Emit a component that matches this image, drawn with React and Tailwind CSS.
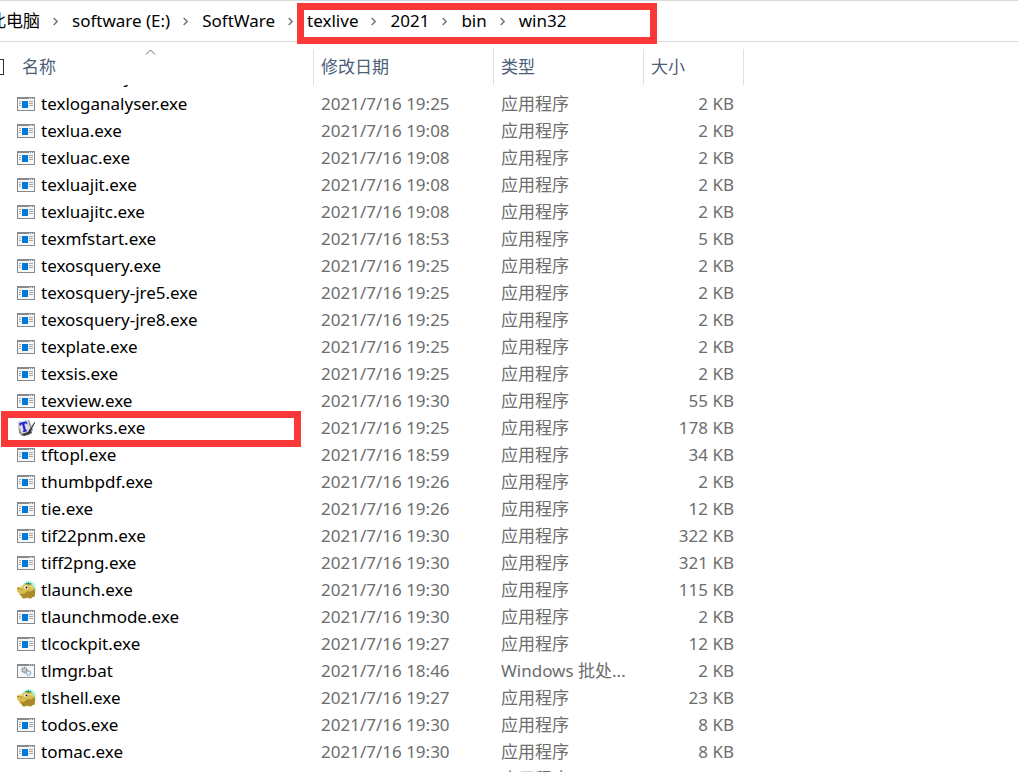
import React, { useLayoutEffect, useRef } from 'react';

const crumbs = ['此电脑', 'software (E:)', 'SoftWare', 'texlive', '2021', 'bin', 'win32'];

const APP = '应用程序';

const files = [
  { name: 'texliveonfly.exe', date: '2021/7/16 19:25', type: APP, size: '2 KB' },
  { name: 'texloganalyser.exe', date: '2021/7/16 19:25', type: APP, size: '2 KB' },
  { name: 'texlua.exe', date: '2021/7/16 19:08', type: APP, size: '2 KB' },
  { name: 'texluac.exe', date: '2021/7/16 19:08', type: APP, size: '2 KB' },
  { name: 'texluajit.exe', date: '2021/7/16 19:08', type: APP, size: '2 KB' },
  { name: 'texluajitc.exe', date: '2021/7/16 19:08', type: APP, size: '2 KB' },
  { name: 'texmfstart.exe', date: '2021/7/16 18:53', type: APP, size: '5 KB' },
  { name: 'texosquery.exe', date: '2021/7/16 19:25', type: APP, size: '2 KB' },
  { name: 'texosquery-jre5.exe', date: '2021/7/16 19:25', type: APP, size: '2 KB' },
  { name: 'texosquery-jre8.exe', date: '2021/7/16 19:25', type: APP, size: '2 KB' },
  { name: 'texplate.exe', date: '2021/7/16 19:25', type: APP, size: '2 KB' },
  { name: 'texsis.exe', date: '2021/7/16 19:25', type: APP, size: '2 KB' },
  { name: 'texview.exe', date: '2021/7/16 19:30', type: APP, size: '55 KB' },
  { name: 'texworks.exe', date: '2021/7/16 19:25', type: APP, size: '178 KB', icon: 'texworks', marked: true },
  { name: 'tftopl.exe', date: '2021/7/16 18:59', type: APP, size: '34 KB' },
  { name: 'thumbpdf.exe', date: '2021/7/16 19:26', type: APP, size: '2 KB' },
  { name: 'tie.exe', date: '2021/7/16 19:26', type: APP, size: '12 KB' },
  { name: 'tif22pnm.exe', date: '2021/7/16 19:30', type: APP, size: '322 KB' },
  { name: 'tiff2png.exe', date: '2021/7/16 19:30', type: APP, size: '321 KB' },
  { name: 'tlaunch.exe', date: '2021/7/16 19:30', type: APP, size: '115 KB', icon: 'hippo' },
  { name: 'tlaunchmode.exe', date: '2021/7/16 19:30', type: APP, size: '2 KB' },
  { name: 'tlcockpit.exe', date: '2021/7/16 19:27', type: APP, size: '12 KB' },
  { name: 'tlmgr.bat', date: '2021/7/16 18:46', type: 'Windows 批处...', size: '2 KB', icon: 'batch' },
  { name: 'tlshell.exe', date: '2021/7/16 19:27', type: APP, size: '23 KB', icon: 'hippo' },
  { name: 'todos.exe', date: '2021/7/16 19:30', type: APP, size: '8 KB' },
  { name: 'tomac.exe', date: '2021/7/16 19:30', type: APP, size: '8 KB' },
  { name: 'tpic2pdftex.exe', date: '2021/7/16 19:30', type: APP, size: '2 KB' },
];

const WindowFrame = () => (
  <>
    <rect width="18" height="14" fill="#868a8f" />
    <rect x="1" y="2" width="16" height="11" fill="#f7f7f7" />
    <path d="M12 1h1M14 1h1M16 1h1" stroke="#e8e8e8" />
  </>
);

const ExeIcon = () => (
  <svg className="shrink-0" width="18" height="14" viewBox="0 0 18 14" shapeRendering="crispEdges" aria-hidden="true">
    <WindowFrame />
    <rect x="5" y="4" width="6" height="7" fill="#0078d7" />
    <path d="M2 4.5h2M2 6.5h2M2 8.5h2M12 4.5h4M12 6.5h4M12 8.5h4" stroke="#a3a6aa" />
  </svg>
);

const BatchIcon = () => (
  <svg className="shrink-0" width="18" height="14" viewBox="0 0 18 14" aria-hidden="true">
    <WindowFrame />
    <circle cx="7.5" cy="6" r="2.5" fill="#dfe3e6" stroke="#74797e" strokeWidth="1.3" strokeDasharray="1.2 .6" />
    <circle cx="7.5" cy="6" r="1" fill="#fff" stroke="#8a8f94" strokeWidth=".6" />
    <circle cx="11.5" cy="9" r="2.2" fill="#d9ecf7" stroke="#7ba3bb" strokeWidth="1.3" strokeDasharray="1.2 .5" />
    <circle cx="11.5" cy="9" r=".8" fill="#fff" />
  </svg>
);

const TexworksIcon = () => (
  <svg className="shrink-0" width="18" height="18" viewBox="0 0 18 18" aria-hidden="true">
    <path d="M1 3 12 1l4 10-4 5-7 1-3-3z" fill="#8d8d92" />
    <path d="m0 3 11-2 3 11-9 3z" fill="#dcdce8" />
    <path d="m5 15 9-3 1 2-8 3z" fill="#3a3a3a" />
    <path d="M2.500 5 9.500 3.300" stroke="#2222c8" strokeWidth="2" />
    <path d="m6 4 2 8" stroke="#2222c8" strokeWidth="2.200" />
    <path d="m6 12.500 4-1" stroke="#2222c8" strokeWidth="1.500" />
    <path d="m2.800 4.500.5 2.500M9.500 3l.6 2.300" stroke="#2222c8" />
    <path d="M17.500 3 12 11l-1 3 2.500-2L18 4z" fill="#222" />
    <path d="m16.500 4.500-4 6" stroke="#c9c9a8" strokeWidth=".6" />
  </svg>
);

const HippoIcon = () => (
  <svg className="shrink-0" width="19" height="18" viewBox="0 0 19 18" aria-hidden="true">
    <circle cx="12" cy="7" r="7" fill="#b4f5e6" />
    <path d="M8 3.200 9.200 1.800l1 .7L11.500 1l1 1.500 1.500-.5.500 1.500-3 .8z" fill="#16825c" />
    <path
      d="M0 6.500C1 5.500 3 6 5 5c1.500-1.500 3-2 5-1.500 2.500-.5 5 .5 6.500 2.500 1.800 2.500 2 6 1 9.500l-2.500.8-.5 1H11l-.5-1.300-1.500 1.300H5.500L4.500 15c-1.500-.5-2.300-1.500-2.500-3C.3 11.500-.3 8 0 6.500z"
      fill="#d8bd4c"
    />
    <path
      d="M3 13c4 .5 6-1.500 8-3 2 1 4.500.5 6.500-2.500 1 2.500.8 5 0 8l-2.500.8-.5 1H11l-.5-1.300-1.500 1.300H5.500L4.500 15z"
      fill="#a98a2a"
    />
    <path d="M1 7.200C3 6.800 5 6.800 6.500 5.500M12 5c1.500 0 2.500.5 3.500 1.800" stroke="#efdc85" strokeWidth="1.200" fill="none" />
    <circle cx="9" cy="6.300" r="1.900" fill="#fff" />
    <circle cx="9.400" cy="6.500" r="1" fill="#111" />
    <path d="M1 7.500h1M3.500 8h1" stroke="#5c4610" />
  </svg>
);

const icons = {
  exe: ExeIcon,
  batch: BatchIcon,
  texworks: TexworksIcon,
  hippo: HippoIcon,
};

const CrumbArrow = () => (
  <span className="pr-3.5 pl-[13px]">
    <svg width="5" height="9" viewBox="0 0 5 9" fill="none" stroke="#757575" strokeWidth="1.500" aria-hidden="true">
      <path d="M.7 1 4.200 4.500.7 8" />
    </svg>
  </span>
);

const Breadcrumb = () => (
  <nav aria-label="Path" className="h-[42px] shrink-0 border-y border-[#d9d9d9] text-black">
    <ol className="-ml-[11px] flex h-full items-center whitespace-nowrap">
      {crumbs.slice(0, 3).map((crumb) => (
        <li key={crumb} className="flex items-center">
          <button type="button">{crumb}</button>
          <CrumbArrow />
        </li>
      ))}
      <li className="relative">
        <ol className="flex items-center">
          {crumbs.slice(3).map((crumb, i) => (
            <li key={crumb} className="flex items-center">
              {i > 0 && <CrumbArrow />}
              <button type="button">{crumb}</button>
            </li>
          ))}
        </ol>
        {/* Path highlight */}
        <div className="pointer-events-none absolute -top-[5px] -left-2.5 z-20 h-[41px] w-[360px] border-[7px] border-[#fb3838]" />
      </li>
    </ol>
  </nav>
);

const HeaderCell = ({ children, className = 'pl-[7px]' }) => (
  <th scope="col" className="sticky top-0 z-10 h-[43px] bg-white p-0 pt-[7px] text-left font-normal text-[#4c607a]">
    <div className={`relative flex h-9 items-center border-r border-[#e0e0e0] ${className}`}>{children}</div>
  </th>
);

const FileRow = ({ file }) => {
  const Icon = icons[file.icon || 'exe'];
  return (
    <tr className="h-[27px]">
      <td className="relative p-0 pl-[17px] text-black">
        <div className="flex items-center gap-1.5">
          <span className="flex w-[18px] shrink-0 justify-center">
            <Icon />
          </span>
          {file.name}
        </div>
        {file.marked && (
          <div className="pointer-events-none absolute -top-[3px] left-px h-9 w-[300px] border-[7px] border-[#fb3838]" />
        )}
      </td>
      <td className="p-0 pl-[7px]">{file.date}</td>
      <td className="p-0 pl-[7px]">{file.type}</td>
      <td className="p-0 pr-2.5 text-right">{file.size}</td>
    </tr>
  );
};

export default function App() {
  const listRef = useRef(null);

  // Open the list part of the way into a row
  useLayoutEffect(() => {
    listRef.current.scrollTop = 22;
  }, []);

  return (
    <div className="flex h-screen flex-col overflow-hidden bg-white font-['Noto_Sans','Noto_Sans_CJK_SC',sans-serif] text-[17px] leading-[26px]">
      <Breadcrumb />
      <main ref={listRef} className="min-h-0 flex-1 overflow-hidden">
        <table className="w-[744px] table-fixed border-separate border-spacing-0 whitespace-nowrap text-[#6d6d6d]">
          <colgroup>
            <col className="w-[314px]" />
            <col className="w-[180px]" />
            <col className="w-[150px]" />
            <col className="w-[100px]" />
          </colgroup>
          <thead>
            <tr>
              <HeaderCell className="gap-[18px]">
                <input
                  type="checkbox"
                  aria-label="全选"
                  className="-ml-3 size-4 shrink-0 appearance-none border border-[#333] bg-white"
                />
                <button type="button">名称</button>
                <svg
                  className="absolute top-0 left-[145px]"
                  width="11"
                  height="6"
                  viewBox="0 0 11 6"
                  fill="none"
                  stroke="#6d6d6d"
                  aria-hidden="true"
                >
                  <path d="M1 5.500 5.500 1 10 5.500" />
                </svg>
              </HeaderCell>
              <HeaderCell>
                <button type="button">修改日期</button>
              </HeaderCell>
              <HeaderCell>
                <button type="button">类型</button>
              </HeaderCell>
              <HeaderCell>
                <button type="button">大小</button>
              </HeaderCell>
            </tr>
          </thead>
          <tbody>
            {files.map((file) => (
              <FileRow key={file.name} file={file} />
            ))}
          </tbody>
        </table>
      </main>
    </div>
  );
}
